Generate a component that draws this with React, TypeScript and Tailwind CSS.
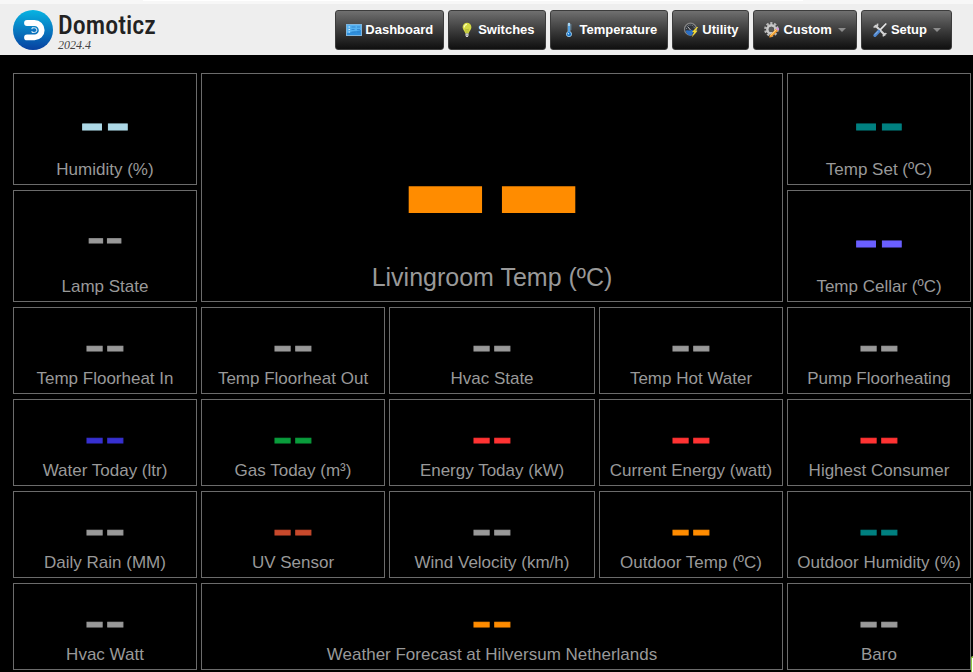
import React from "react";

type Size = "small" | "lamp" | "medium" | "large";

interface Tile {
  label: string;
  color?: string;
  size?: Size;
  span?: string;
}

const tiles: Tile[] = [
  { label: "Humidity (%)", color: "text-[#add8e6]", size: "medium" },
  {
    label: "Livingroom Temp (ºC)",
    color: "text-[#ff8c00]",
    size: "large",
    span: "col-span-3 row-span-2",
  },
  { label: "Temp Set (ºC)", color: "text-[#008080]", size: "medium" },
  { label: "Lamp State", size: "lamp" },
  { label: "Temp Cellar (ºC)", color: "text-[#6a5fff]", size: "medium" },
  { label: "Temp Floorheat In" },
  { label: "Temp Floorheat Out" },
  { label: "Hvac State" },
  { label: "Temp Hot Water" },
  { label: "Pump Floorheating" },
  { label: "Water Today (ltr)", color: "text-[#3730d0]" },
  { label: "Gas Today (m³)", color: "text-[#0a9c3c]" },
  { label: "Energy Today (kW)", color: "text-[#ff3333]" },
  { label: "Current Energy (watt)", color: "text-[#ff3333]" },
  { label: "Highest Consumer", color: "text-[#ff3333]" },
  { label: "Daily Rain (MM)" },
  { label: "UV Sensor", color: "text-[#c8492c]" },
  { label: "Wind Velocity (km/h)" },
  { label: "Outdoor Temp (ºC)", color: "text-[#ff8c00]" },
  { label: "Outdoor Humidity (%)", color: "text-[#008080]" },
  { label: "Hvac Watt" },
  {
    label: "Weather Forecast at Hilversum Netherlands",
    color: "text-[#ff8c00]",
    span: "col-span-3",
  },
  { label: "Baro" },
];

const valueSize: Record<Size, string> = {
  small: "text-[62px] leading-[50px] [-webkit-text-stroke:1px_currentColor]",
  lamp: "text-[55px] leading-[80px] [-webkit-text-stroke:1px_currentColor]",
  medium: "text-[77px] leading-[78px] [-webkit-text-stroke:1px_currentColor]",
  large:
    "text-[280px] leading-[160px] [-webkit-text-stroke:5px_currentColor] [stroke-linejoin:round]",
};

function TileCard({ label, color = "text-[#999999]", size = "small", span = "" }: Tile) {
  return (
    <section
      className={`flex min-w-0 flex-col items-center justify-end border border-[#6b6b6b] pb-1 ${span}`}
    >
      <div className={`${valueSize[size]} ${color}`}>--</div>
      <h2
        className={`whitespace-nowrap text-[#999999] ${
          size === "large" ? "text-[25px] leading-10" : "text-[17px] leading-5"
        }`}
      >
        {label}
      </h2>
    </section>
  );
}

function DashboardIcon() {
  return (
    <svg viewBox="0 0 16 16" className="size-4" aria-hidden="true">
      <rect x="0.5" y="2.5" width="15" height="11" fill="#2f8fdc" stroke="#7fb4dc" />
      <path d="M1 3h14v5L1 11z" fill="#55b2f2" />
      <path d="M2.5 5h1.5M2.5 7.5h1.5M2.5 10h1.5" stroke="#d4efff" />
      <path d="M5.5 5h4M5.5 7.5h3M5.5 10h4M11 5h3M11 7.5h3M11 10h3" stroke="#2b7fc8" strokeWidth=".8" />
    </svg>
  );
}

function BulbIcon() {
  return (
    <svg viewBox="0 0 16 16" className="size-4" aria-hidden="true">
      <path d="M8 .8a4.4 4.4 0 0 0-4.4 4.4c0 2.4 2 3.6 2.8 6.3h3.2c.8-2.7 2.8-3.9 2.8-6.3A4.4 4.4 0 0 0 8 .8z" fill="#d4da45" />
      <path d="M5.3 5.5A2.8 2.8 0 0 1 8 2.4" stroke="#faffae" strokeWidth="1.3" fill="none" />
      <path d="M7.3 11l-.6-4 1.3 1 1.3-1-.6 4" stroke="#a8b030" strokeWidth=".6" fill="none" />
      <path d="M6.5 11.5h3v2.3L8.7 15H7.3l-.8-1.2z" fill="#e4e4e4" />
      <path d="M6.6 13.2h2.8" stroke="#666" strokeWidth=".7" />
    </svg>
  );
}

function ThermometerIcon() {
  return (
    <svg viewBox="0 0 16 16" className="size-4" aria-hidden="true">
      <path d="M6.7 2a1.3 1.3 0 0 1 2.6 0v7.6a2.9 2.9 0 1 1-2.6 0z" fill="#a8d5f2" />
      <circle cx="8" cy="12.2" r="2.1" fill="#1673c8" />
      <path d="M8 4v8" stroke="#1f82d8" strokeWidth="1.2" />
      <path d="M9.4 3h1.2M9.4 5h1.2M9.4 7h1.2" stroke="#6db2e2" strokeWidth=".7" />
      <circle cx="7.4" cy="11.7" r=".7" fill="#d9f1ff" />
    </svg>
  );
}

function GaugeIcon() {
  return (
    <svg viewBox="0 0 16 16" className="size-4" aria-hidden="true">
      <circle cx="7.5" cy="7.2" r="6" fill="#30343a" stroke="#858585" strokeWidth="1.2" />
      <path d="M3.5 7a4 4 0 0 1 8 0" fill="none" stroke="#9ca4ac" strokeDasharray="1 1" />
      <path d="M7.5 8L5 5" stroke="#ddd" strokeWidth=".8" />
      <path d="M2.6 8.8c2-1.6 3.3.4 4.9-.4 1.2-.6 2.3-.2 3 .8-.4 2.2-2 4.2-3.2 4.6-2-.8-4.1-2.4-4.7-5z" fill="#2a70c8" />
      <path d="M13.8 5L9 10l2 .3-2.3 5.2 5.8-6.7-2-.1 2.6-3.7z" fill="#f3db35" />
    </svg>
  );
}

function GearIcon() {
  return (
    <svg viewBox="0 0 16 16" className="size-4" aria-hidden="true">
      <circle cx="7.4" cy="7.4" r="6" fill="none" stroke="#b9b9b9" strokeWidth="2.6" strokeDasharray="2.2 1.57" />
      <circle cx="7.4" cy="7.4" r="4" fill="none" stroke="#c8c8c8" strokeWidth="2.6" />
      <circle cx="7.4" cy="7.4" r="2.6" fill="#5a5a5a" />
      <path d="M7.4 15.2l-2.2.4.5-2.2L12 6.8l2 2z" fill="#f29a2b" />
      <path d="M6.6 13.6l6.1-6.3" stroke="#ffe08a" strokeWidth=".9" />
      <path d="M12 6.8l1-1c.8-.8 2.8 1.2 2 2l-1 1z" fill="#d79bd8" />
    </svg>
  );
}

function ToolsIcon() {
  return (
    <svg viewBox="0 0 16 16" className="size-4" aria-hidden="true">
      <path d="M3.6 3.8l9 9" stroke="#d5d5d5" strokeWidth="2.2" strokeLinecap="round" />
      <path d="M1.6 4.4a2.6 2.6 0 0 0 3.9-2.8" stroke="#cfcfcf" strokeWidth="1.8" fill="none" />
      <path d="M14.5 11.8a2.1 2.1 0 0 0-3 2.7" stroke="#cfcfcf" strokeWidth="1.5" fill="none" />
      <path d="M13.8 2L7.6 8.4" stroke="#e6e6e6" strokeWidth="1.7" strokeLinecap="round" />
      <path d="M6.7 9.3l-3.8 4" stroke="#4e86cf" strokeWidth="3.2" strokeLinecap="round" />
      <path d="M6.1 9.2L3 12.5" stroke="#a9cbf3" strokeWidth=".8" />
    </svg>
  );
}

interface NavItem {
  label: string;
  icon: React.ReactNode;
  menu?: boolean;
}

const nav: NavItem[] = [
  { label: "Dashboard", icon: <DashboardIcon /> },
  { label: "Switches", icon: <BulbIcon /> },
  { label: "Temperature", icon: <ThermometerIcon /> },
  { label: "Utility", icon: <GaugeIcon /> },
  { label: "Custom", icon: <GearIcon />, menu: true },
  { label: "Setup", icon: <ToolsIcon />, menu: true },
];

function NavButton({ label, icon, menu }: NavItem) {
  return (
    <button
      type="button"
      aria-haspopup={menu ? "menu" : undefined}
      className="flex h-10 cursor-pointer items-center rounded-[3px] border border-[#3c3c3c] bg-linear-to-b from-[#707070] to-[#101010] px-2.5 text-[13px] leading-5 font-bold text-white"
    >
      {icon}
      <span className="ml-[3px]">{label}</span>
      {menu && (
        <span className="ml-1.5 border-x-4 border-t-4 border-x-transparent border-t-[#8c8c8c]" />
      )}
    </button>
  );
}

function Logo() {
  return (
    <a href="#dashboard" className="flex items-center gap-[5px]">
      <svg viewBox="0 0 40 40" className="size-10" aria-hidden="true">
        <defs>
          <linearGradient id="disc" x1="0" y1="0" x2="0" y2="1">
            <stop offset="0" stopColor="#08b4e2" />
            <stop offset="1" stopColor="#0740a0" />
          </linearGradient>
        </defs>
        <circle cx="20" cy="20" r="20" fill="url(#disc)" />
        <path
          d="M14 13h7.5a7.2 7.2 0 0 1 0 14.4h-7.5"
          fill="none"
          stroke="#fff"
          strokeWidth="5.8"
          strokeLinecap="round"
        />
        <path d="M19 17.8h2.6a2.3 2.3 0 0 1 0 4.6H19z" fill="#0b74c2" stroke="#fff" strokeWidth=".9" />
        <path d="M17.6 20.1h3.4" stroke="#0b74c2" strokeWidth="1.8" />
      </svg>
      <span className="flex flex-col">
        <span className="font-['Roboto_Condensed','Liberation_Sans',sans-serif] text-[26px] leading-[30px] font-medium text-[#222222]">
          Domoticz
        </span>
        <span className="font-['Liberation_Serif',serif] text-[12px] leading-[10px] text-[#444444] italic">
          2024.4
        </span>
      </span>
    </a>
  );
}

export default function App() {
  return (
    <div className="relative min-h-screen overflow-hidden bg-black font-['Liberation_Sans',Arial,sans-serif]">
      <div className="h-1 bg-[#f7f7f7] pr-[170px] pl-[143px]">
        <div className="h-px bg-white" />
      </div>
      <header className="flex items-start justify-between bg-[#eeeeee] pt-1.5 pr-[21px] pb-[5px] pl-[13px]">
        <Logo />
        <nav className="flex gap-1">
          {nav.map((item) => (
            <NavButton key={item.label} {...item} />
          ))}
        </nav>
      </header>
      <main className="grid grid-cols-[184fr_184fr_206fr_184fr_184fr] grid-rows-[112px_112px] auto-rows-[87px] gap-x-1 gap-y-[5px] pt-[18px] pr-0.5 pb-0.5 pl-[13px]">
        {tiles.map((tile) => (
          <TileCard key={tile.label} {...tile} />
        ))}
      </main>
      <div className="absolute right-0 bottom-0 h-4 w-0.5 rounded-tl-sm border-t-2 border-l border-[#8cc63f] bg-white" />
    </div>
  );
}
